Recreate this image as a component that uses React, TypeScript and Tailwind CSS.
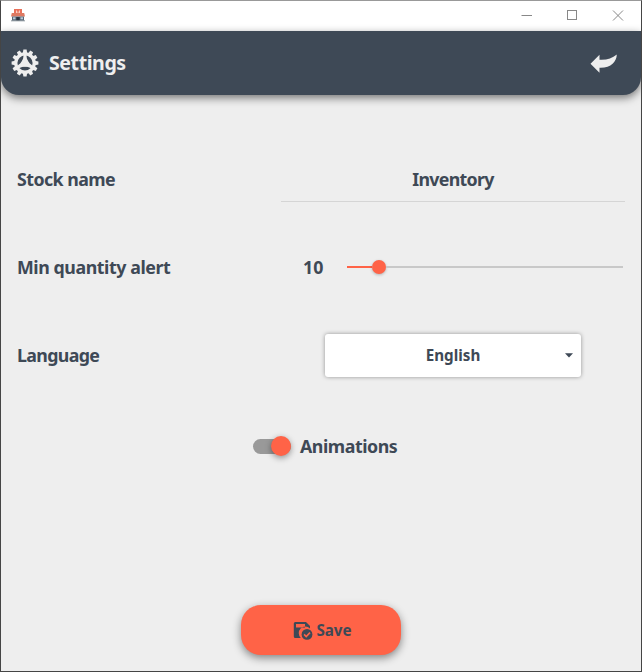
import React from 'react';

const GEAR_TEETH = [0, 30, 60, 90, 120, 150, 180, 210, 240, 270, 300, 330];

function StoreIcon() {
  return (
    <svg width="14" height="13" viewBox="0 0 14 13">
      <rect x="3" y="0" width="8" height="5" fill="#e8705a" />
      <path d="M5 1.5h1v1.2h2V1.5h1v3H8V3.6H6v.9H5z" fill="#f8cfc4" />
      <path d="M0.8 4h12.4L14 7.6H0z" fill="#dd7962" />
      <rect x="1" y="7.5" width="12" height="4.3" fill="#566575" />
      <rect x="2" y="8.3" width="2.5" height="2" fill="#b9cad8" />
      <rect x="9.5" y="8.3" width="2.5" height="2" fill="#b9cad8" />
      <rect x="5.4" y="8.1" width="3.2" height="3.7" fill="#29333e" />
      <rect x="0" y="11.3" width="14" height="1" fill="#8b949c" />
    </svg>
  );
}

function GearIcon() {
  return (
    <svg width="28" height="28" viewBox="-14 -14 28 28" fill="#eeeeee">
      {GEAR_TEETH.map((angle) => (
        <path key={angle} d="M-2.2 -9.8L-1.6 -13.4H1.6L2.2 -9.8z" transform={`rotate(${angle})`} />
      ))}
      <circle r="9.2" fill="none" stroke="#eeeeee" strokeWidth="3.2" />
      {[0, 120, 240].map((angle) => (
        <path key={angle} d="M-1.3 -8.5H1.3L1.9 -4.5L4 .5L0 3.5L-4 .5L-1.9 -4.5z" transform={`rotate(${angle})`} />
      ))}
    </svg>
  );
}

function SaveIcon() {
  return (
    <svg width="20" height="20" viewBox="0 0 20 20">
      <path
        fillRule="evenodd"
        d="M2.3 2H13L17 6V8.4A6.4 6.4 0 0 0 7.8 18H2.3Q.8 18 .8 16.5V3.5Q.8 2 2.3 2zM3 4V7.4H12V4z"
        fill="#3e4956"
      />
      <circle cx="14" cy="14.4" r="5.4" fill="#3e4956" />
      <path d="M11.1 14.4L13.2 16.5L17 12.6" fill="none" stroke="#ff6347" strokeWidth="1.6" />
    </svg>
  );
}

function TitleBar() {
  return (
    <div className="flex h-[30px] shrink-0 items-center bg-white pb-0.5 pl-[10px]">
      <StoreIcon />
      <svg className="ml-auto mr-[17px] mt-0.5" width="104" height="12" viewBox="0 0 104 12" fill="none" stroke="#888888">
        <path d="M1.5 5.5H12" />
        <rect x="47.5" y=".5" width="9" height="9" />
        <path d="M93 .5L103 10.5M103 .5L93 10.5" />
      </svg>
    </div>
  );
}

export default function App() {
  return (
    <div className="flex h-[672px] w-[642px] flex-col overflow-hidden border border-[#454545] border-t-[#999999] bg-[#eeeeee] font-['Noto_Sans','Open_Sans',sans-serif] text-[17.8px] font-bold leading-6 text-[#3e4956]">
      <TitleBar />
      <header className="flex h-16 shrink-0 items-center rounded-b-[18px] bg-[#3e4956] pl-[10px] pr-[23px] text-[#eeeeee] shadow-[0_3px_9px_rgba(0,0,0,0.5)]">
        <GearIcon />
        <h1 className="ml-[10px] text-[19.6px] tracking-[-0.45px]">Settings</h1>
        <svg className="ml-auto mt-0.5" width="28" height="20" viewBox="0 0 28 20" fill="#eeeeee">
          <path d="M.5 9.7L9.5 .7V5.8C17 6.2 22 4.5 26.8 .6C26.5 8 21 14.2 9.5 13.8V18.7z" />
        </svg>
      </header>

      <main className="flex min-h-0 flex-1 flex-col px-4 pt-[63px]">
        <div className="flex h-11 items-center">
          <label className="w-[264px] pb-0.5 tracking-[-0.55px]">Stock name</label>
          <div className="flex h-11 flex-1 items-center justify-center border-b border-[#d5d5d5] pb-px tracking-[-0.7px]">
            Inventory
          </div>
        </div>
        <div className="mt-11 flex h-11 items-center pb-0.5 pr-0.5">
          <label className="w-[286px] tracking-[-0.43px]">Min quantity alert</label>
          <span className="w-11">10</span>
          <div className="flex flex-1 items-center">
            <div className="h-0.5 w-[24.5px] bg-[#ff6347]" />
            <div className="size-[14px] rounded-full bg-[#ff6347] shadow-[0_1px_3px_rgba(0,0,0,0.25)]" />
            <div className="h-0.5 flex-1 bg-[#c8c8c8]" />
          </div>
        </div>
        <div className="mt-11 flex h-11 items-center">
          <label className="w-[308px] pb-0.5 tracking-[-0.65px]">Language</label>
          <div className="mb-px flex h-[43px] w-[256px] items-center rounded-[3px] bg-white pb-px pl-4 pr-2 text-[15.2px] shadow-[0_0_4px_rgba(0,0,0,0.38)]">
            <span className="flex-1 text-center">English</span>
            <svg width="8" height="5" viewBox="0 0 8 5" fill="#3e4956">
              <path d="M0 .2H8L4 4.5z" />
            </svg>
          </div>
        </div>
        <div className="mt-[46px] flex h-11 items-center pl-[236px]">
          <div className="mr-[9px] flex h-[15px] w-[38px] items-center justify-end rounded-full bg-[#999999]">
            <div className="size-5 shrink-0 rounded-full bg-[#ff6347] shadow-[0_2px_6px_rgba(0,0,0,0.4)]" />
          </div>
          <span className="tracking-[-0.45px]">Animations</span>
        </div>
        <button className="mb-4 mt-auto flex h-[50px] w-40 shrink-0 items-center justify-center gap-[3px] self-center rounded-[20px] bg-[#ff6347] pl-[3px] text-[15.2px] shadow-[0_3px_9px_rgba(0,0,0,0.45)]">
          <SaveIcon />
          <span>Save</span>
        </button>
      </main>
    </div>
  );
}
